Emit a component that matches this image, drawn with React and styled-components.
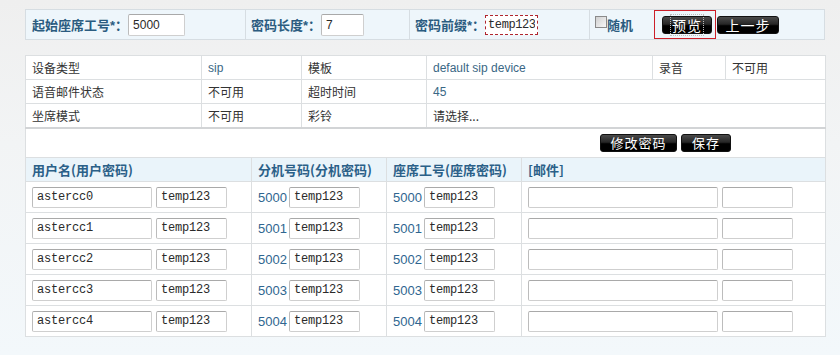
import React from 'react';
import styled, { createGlobalStyle } from 'styled-components';

const GlobalStyle = createGlobalStyle`
    html, body {
        margin: 0;
        padding: 0;
    }
    body {
        background: linear-gradient(to bottom, #efefef 0%, #f2f4f5 40%, #f3f8fb 100%);
        font-family: "Liberation Sans", "Noto Sans CJK SC", sans-serif;
        font-size: 12px;
        color: #333;
        min-height: 355px;
    }
`;

const Page = styled.div`
    width: 800px;
    padding: 9px 0 0 25px;
    display: flex;
    flex-direction: column;
    gap: 15px;
`;

const TopBar = styled.div`
    display: flex;
    height: 31px;
    background: #eef6fb;
    border: 1px solid #d6dde2;
    box-sizing: border-box;
`;

const TopCell = styled.div`
    display: flex;
    align-items: center;
    width: ${p => p.$w}px;
    padding-left: ${p => p.$pl || 6}px;
    box-sizing: border-box;
    border-right: ${p => (p.$last ? 'none' : '1px solid #d6dde2')};
`;

const Label = styled.span`
    font-weight: bold;
    font-size: 13px;
    color: #2b5c80;
    white-space: nowrap;
`;

const TextInput = styled.input`
    width: ${p => p.$w}px;
    height: ${p => p.$h || 21}px;
    box-sizing: border-box;
    border: 1px solid #cfcfcf;
    border-top-color: #a9a9a9;
    border-left-color: #bcbcbc;
    border-radius: 2px;
    background: #fff;
    padding: 0 4px;
    margin: 0;
    font-family: ${p => (p.$mono ? '"Liberation Mono", monospace' : '"Liberation Sans", sans-serif')};
    font-size: 12px;
    letter-spacing: ${p => (p.$mono ? '-0.2px' : '0')};
    color: #2a2a2a;
    outline: none;
`;

const DashedInput = styled(TextInput)`
    border: 1px dashed #b0262e;
    border-radius: 0;
    padding: 0 2px;
    letter-spacing: -0.4px;
`;

const Check = styled.span`
    width: 12px;
    height: 12px;
    margin-bottom: 6px;
    border: 1px solid #8a8a8a;
    background: linear-gradient(135deg, #d0d0d0, #f7f7f7);
    box-sizing: border-box;
`;

const ButtonGroup = styled.div`
    display: flex;
    align-items: center;
    gap: 1px;
    margin-left: 21px;
`;

const Focused = styled.div`
    display: flex;
    align-items: center;
    height: 29px;
    padding: 0 3px 0 7px;
    border: 1px solid #cc1f29;
    box-sizing: border-box;
`;

const BlackButton = styled.button`
    width: ${p => p.$w}px;
    height: 18px;
    border: 1px solid #111;
    border-radius: 3px;
    background: linear-gradient(to bottom, #4a4a4a 0%, #262626 45%, #000 55%, #000 100%);
    color: #fff;
    font-family: "Noto Sans CJK SC", sans-serif;
    font-size: ${p => p.$fs || 14}px;
    line-height: 16px;
    padding: 0;
    margin: 0;
    letter-spacing: 1px;
    cursor: pointer;
    span {
        outline: ${p => (p.$focus ? '1px dotted #bbb' : 'none')};
        padding: 0 1px;
    }
`;

const Table = styled.table`
    width: 800px;
    border-collapse: collapse;
    background: #fff;
    table-layout: fixed;
`;

const Td = styled.td`
    height: 23px;
    border: 1px solid #dcdfe1;
    padding: 0 0 0 6px;
    font-family: "Noto Sans CJK SC", sans-serif;
    font-size: 12px;
    color: ${p => (p.$blue ? '#3a6785' : '#333')};
    vertical-align: middle;
    white-space: nowrap;
    line-height: 14px;
    border-bottom: ${p => (p.$thick ? '2px solid #d2d4d6' : '1px solid #dcdfe1')};
`;

const Latin = styled.span`
    font-family: "Liberation Sans", sans-serif;
`;

const ToolRow = styled.div`
    display: flex;
    justify-content: flex-end;
    align-items: center;
    gap: 4px;
    height: 28px;
    padding-right: 94px;
`;

const Th = styled.th`
    height: 23px;
    background: #eaf4fa;
    border: 1px solid #dcdfe1;
    padding: 0 0 0 6px;
    text-align: left;
    font-size: 13px;
    font-weight: bold;
    font-family: "Noto Sans CJK SC", sans-serif;
    color: #2b6088;
    white-space: nowrap;
`;

const DataTd = styled.td`
    height: 30px;
    border: 1px solid #dcdfe1;
    padding: 0 0 0 6px;
    vertical-align: middle;
`;

const CellFlex = styled.div`
    display: flex;
    align-items: center;
    gap: 4px;
`;

const Num = styled.span`
    font-size: 13px;
    color: #2f6690;
    width: 27px;
    font-family: "Liberation Sans", sans-serif;
`;

const BottomWrap = styled.div`
    padding-left: 25px;
    width: 800px;
`;

const ToolCell = styled.td`
    padding: 0;
    border: 1px solid #dcdfe1;
    border-top: none;
    height: 28px;
`;

const rows = [0, 1, 2, 3, 4];

export default function App() {
    return (
        <>
            <GlobalStyle />
            <Page>
                <TopBar>
                    <TopCell $w={220}>
                        <Label>起始座席工号*：</Label>
                        <TextInput $w={57} $h={22} defaultValue="5000" />
                    </TopCell>
                    <TopCell $w={164} $pl={5}>
                        <Label>密码长度*：</Label>
                        <TextInput $w={43} $h={22} defaultValue="7" />
                    </TopCell>
                    <TopCell $w={180} $pl={5}>
                        <Label>密码前缀*：</Label>
                        <DashedInput $w={53} $h={20} $mono defaultValue="temp123" />
                    </TopCell>
                    <TopCell $w={234} $pl={5} $last>
                        <Check />
                        <Label>随机</Label>
                        <ButtonGroup>
                            <Focused>
                                <BlackButton $w={50} $focus><span>预览</span></BlackButton>
                            </Focused>
                            <BlackButton $w={62}>上一步</BlackButton>
                        </ButtonGroup>
                    </TopCell>
                </TopBar>

                <Table>
                    <colgroup>
                        <col style={{ width: 176 }} />
                        <col style={{ width: 100 }} />
                        <col style={{ width: 125 }} />
                        <col style={{ width: 226 }} />
                        <col style={{ width: 73 }} />
                        <col style={{ width: 100 }} />
                    </colgroup>
                    <tbody>
                        <tr>
                            <Td>设备类型</Td>
                            <Td $blue><Latin>sip</Latin></Td>
                            <Td>模板</Td>
                            <Td $blue><Latin>default sip device</Latin></Td>
                            <Td>录音</Td>
                            <Td>不可用</Td>
                        </tr>
                        <tr>
                            <Td>语音邮件状态</Td>
                            <Td>不可用</Td>
                            <Td>超时时间</Td>
                            <Td $blue colSpan={3}><Latin>45</Latin></Td>
                        </tr>
                        <tr>
                            <Td $thick>坐席模式</Td>
                            <Td $thick>不可用</Td>
                            <Td $thick>彩铃</Td>
                            <Td $thick colSpan={3}>请选择...</Td>
                        </tr>
                    </tbody>
                </Table>
            </Page>
            <BottomWrap>
                <Table>
                    <colgroup>
                        <col style={{ width: 226 }} />
                        <col style={{ width: 135 }} />
                        <col style={{ width: 135 }} />
                        <col style={{ width: 304 }} />
                    </colgroup>
                    <tbody>
                        <tr>
                            <ToolCell colSpan={4}>
                                <ToolRow>
                                    <BlackButton $w={77} $fs={13}>修改密码</BlackButton>
                                    <BlackButton $w={50} $fs={13}>保存</BlackButton>
                                </ToolRow>
                            </ToolCell>
                        </tr>
                        <tr>
                            <Th>用户名(用户密码)</Th>
                            <Th>分机号码(分机密码)</Th>
                            <Th>座席工号(座席密码)</Th>
                            <Th>[邮件]</Th>
                        </tr>
                        {rows.map(i => (
                            <tr key={i}>
                                <DataTd>
                                    <CellFlex>
                                        <TextInput $w={120} $mono defaultValue={`astercc${i}`} />
                                        <TextInput $w={71} $mono defaultValue="temp123" />
                                    </CellFlex>
                                </DataTd>
                                <DataTd>
                                    <CellFlex>
                                        <Num>{5000 + i}</Num>
                                        <TextInput $w={71} $mono defaultValue="temp123" />
                                    </CellFlex>
                                </DataTd>
                                <DataTd>
                                    <CellFlex>
                                        <Num>{5000 + i}</Num>
                                        <TextInput $w={71} $mono defaultValue="temp123" />
                                    </CellFlex>
                                </DataTd>
                                <DataTd>
                                    <CellFlex>
                                        <TextInput $w={190} />
                                        <TextInput $w={71} />
                                    </CellFlex>
                                </DataTd>
                            </tr>
                        ))}
                    </tbody>
                </Table>
            </BottomWrap>
        </>
    );
}
